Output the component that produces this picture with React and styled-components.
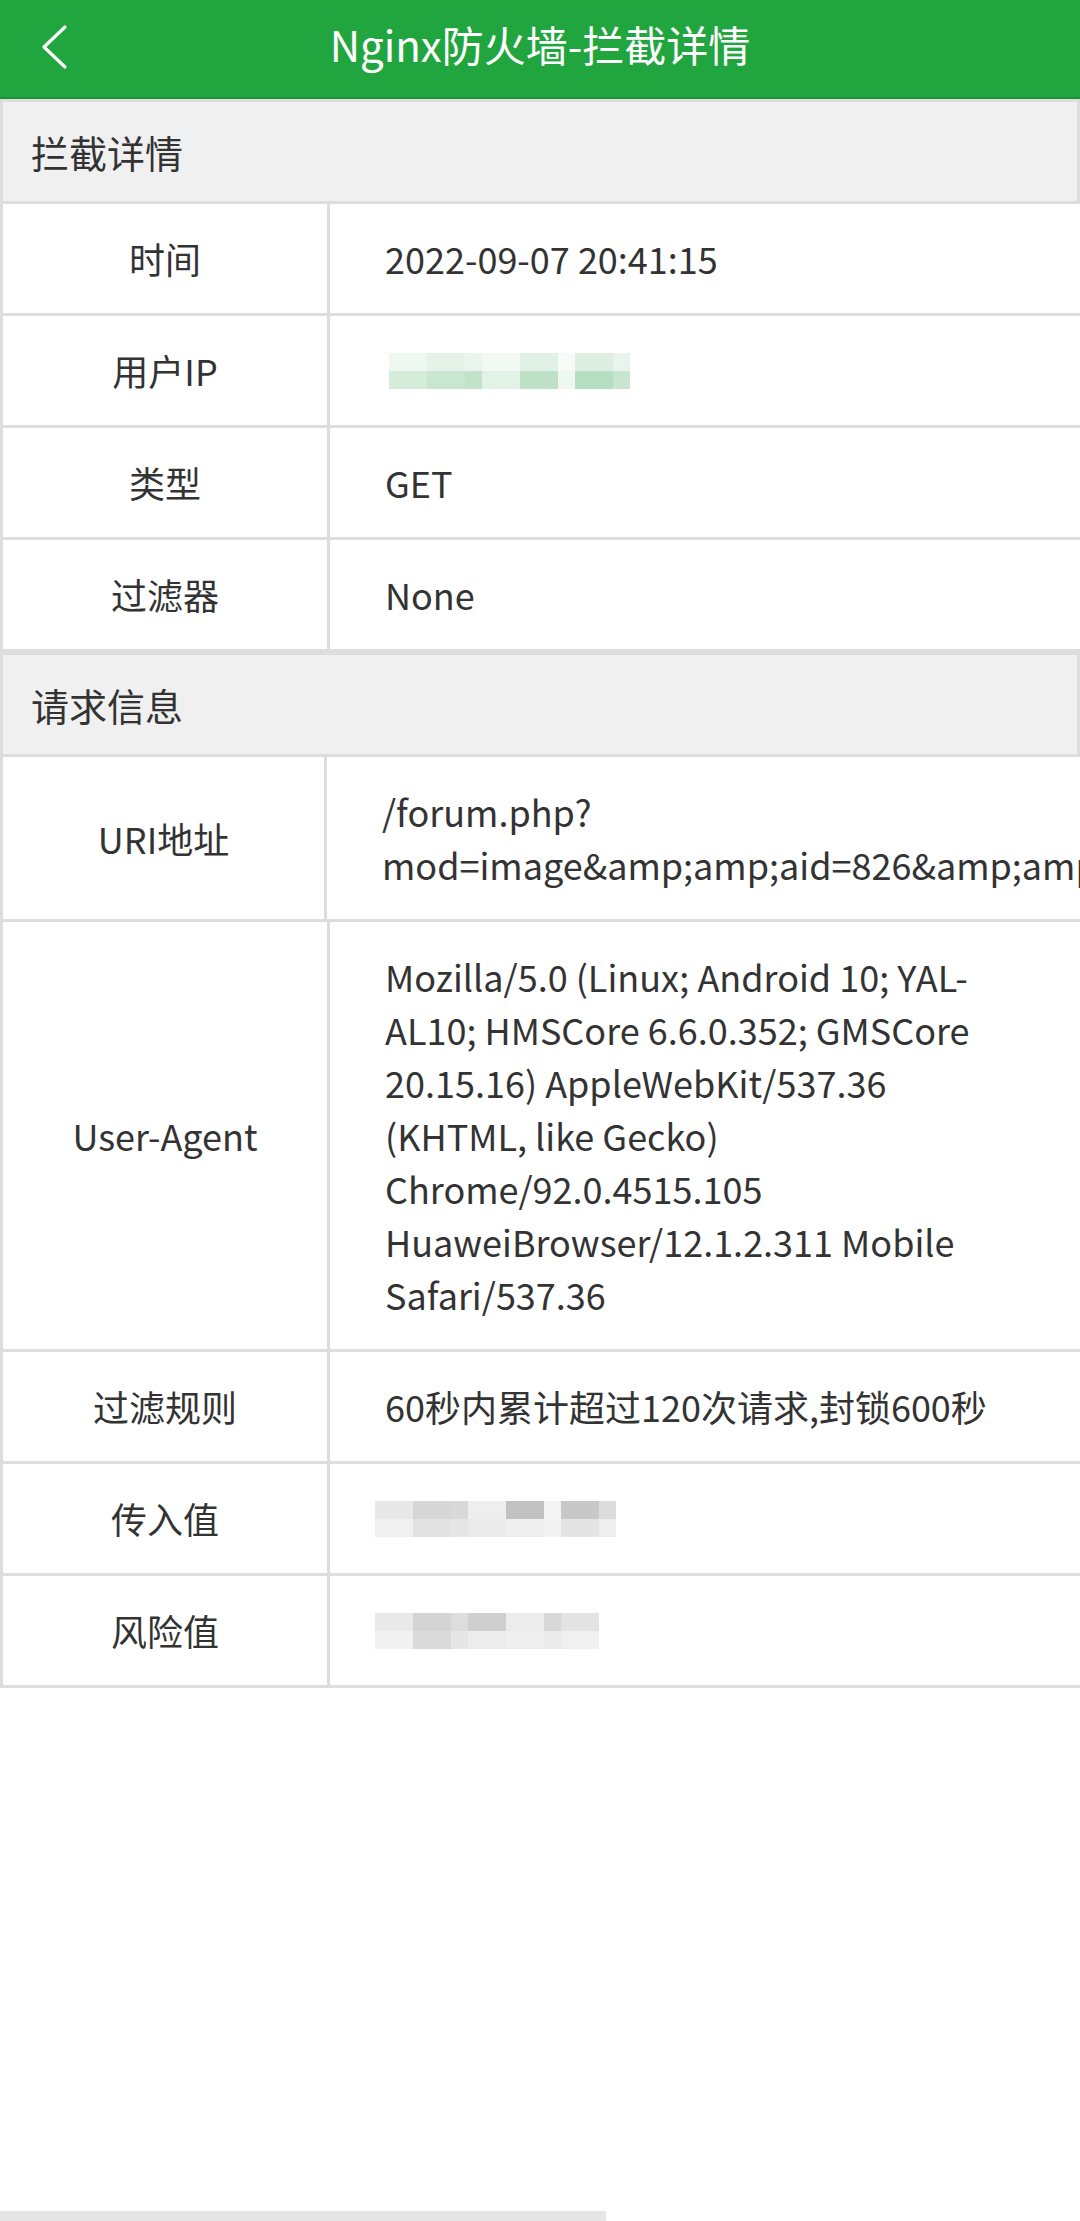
import React from 'react';
import styled, { createGlobalStyle } from 'styled-components';

const GlobalStyle = createGlobalStyle`
  html, body {
    margin: 0;
    padding: 0;
    background: #fff;
    overflow-x: hidden;
  }
  body {
    font-family: "Noto Sans CJK SC", "Noto Sans", sans-serif;
    color: #333;
  }
`

const Page = styled.div`
  width: 1080px;
  min-height: 2221px;
  overflow: hidden;
  background: #fff;
`

const Header = styled.div`
  position: relative;
  height: 99px;
  box-sizing: border-box;
  padding-bottom: 10px;
  background: #21a53e;
  border-bottom: 2px solid #1d9337;
  display: flex;
  align-items: center;
  justify-content: center;
`

const BackBtn = styled.div`
  position: absolute;
  left: 36px;
  top: 20px;
  width: 36px;
  height: 54px;
  display: flex;
  align-items: center;
  justify-content: center;
`

const Title = styled.h1`
  margin: 0;
  font-size: 42px;
  font-weight: 400;
  line-height: 56px;
  color: #fff;
`

const Section = styled.section`
  display: flex;
  flex-direction: column;
`

const SectionTitle = styled.div`
  background: #f0f0f0;
  border: 3px solid #dddddd;
  padding: 23px 28px;
  font-size: 38px;
  line-height: 53px;
  color: #333;
`

const Row = styled.div`
  display: grid;
  grid-template-columns: ${p => p.$labelWidth}px minmax(0, 1fr);
  border-left: 3px solid #dddddd;
  border-bottom: 3px solid #dddddd;
`

const Label = styled.div`
  border-right: 3px solid #dddddd;
  display: flex;
  align-items: center;
  justify-content: center;
  font-size: 36px;
  line-height: 53px;
  color: #333;
`

const Value = styled.div`
  padding: 28px 87px 28px 55px;
  font-size: 36px;
  line-height: 53px;
  color: #333;
  display: flex;
  align-items: center;
  min-height: 53px;
`

const ValueText = styled.div`
  white-space: ${p => (p.$nowrap ? 'nowrap' : 'normal')};
  word-break: normal;
`

const Mosaic = styled.div`
  display: flex;
  flex-direction: column;
  margin-left: ${p => p.$shift}px;
`

const MosaicRow = styled.div`
  display: flex;
`

const Tile = styled.span`
  display: block;
  width: ${p => p.$w}px;
  height: 18px;
  background: ${p => p.$c};
`

const ScrollThumb = styled.div`
  position: fixed;
  left: 0;
  bottom: 0;
  width: 606px;
  height: 10px;
  background: #e6e6e6;
`

const ipMosaic = [
  ['#eef7f0', '#e4f2e7', '#e9f5ec', '#f2f9f3', '#e2f1e5', '#f6fbf7', '#dcefe1', '#e9f5ec'],
  ['#d6ecdb', '#c9e6d0', '#c2e3ca', '#e3f2e6', '#bde0c6', '#eef7f0', '#b6dec1', '#c8e6cf'],
];
const inMosaic = [
  ['#e8e8e8', '#d6d6d6', '#d9d9d9', '#eeeeee', '#c2c2c2', '#f4f4f4', '#c8c8c8', '#dcdcdc'],
  ['#f0f0f0', '#e2e2e2', '#e6e6e6', '#eaeaea', '#efefef', '#f3f3f3', '#e4e4e4', '#eeeeee'],
];
const riskMosaic = [
  ['#e9e9e9', '#d4d4d4', '#dddddd', '#cfcfcf', '#ececec', '#d8d8d8', '#e3e3e3'],
  ['#f1f1f1', '#dadada', '#e6e6e6', '#ececec', '#efefef', '#eaeaea', '#f0f0f0'],
];
const tileWidths = [38, 38, 17, 38, 38, 17, 38, 17];

const Blur = ({ rows, shift }) => (
  <Mosaic $shift={shift}>
    {rows.map((r, i) => (
      <MosaicRow key={i}>
        {r.map((c, j) => (
          <Tile key={j} $c={c} $w={tileWidths[j]} />
        ))}
      </MosaicRow>
    ))}
  </Mosaic>
);

const ChevronLeft = () => (
  <svg width="30" height="46" viewBox="0 0 30 46" fill="none">
    <path d="M26 3 L5 23 L26 43" stroke="#fff" strokeWidth="3.2" strokeLinecap="round" strokeLinejoin="round" />
  </svg>
);

const ua =
  'Mozilla/5.0 (Linux; Android 10; YAL-AL10; HMSCore 6.6.0.352; GMSCore 20.15.16) AppleWebKit/537.36 (KHTML, like Gecko) Chrome/92.0.4515.105 HuaweiBrowser/12.1.2.311 Mobile Safari/537.36';

const uri = '/forum.php?mod=image&amp;amp;aid=826&amp;amp;size=300x300&amp;amp;key=';

const App = () => {
  return (
    <>
      <GlobalStyle />
      <Page>
        <Header>
          <BackBtn>
            <ChevronLeft />
          </BackBtn>
          <Title>Nginx防火墙-拦截详情</Title>
        </Header>

        <Section>
          <SectionTitle>拦截详情</SectionTitle>
          <Row $labelWidth={327}>
            <Label>时间</Label>
            <Value>2022-09-07 20:41:15</Value>
          </Row>
          <Row $labelWidth={327}>
            <Label>用户IP</Label>
            <Value>
              <Blur rows={ipMosaic} shift={4} />
            </Value>
          </Row>
          <Row $labelWidth={327}>
            <Label>类型</Label>
            <Value>GET</Value>
          </Row>
          <Row $labelWidth={327}>
            <Label>过滤器</Label>
            <Value>None</Value>
          </Row>
        </Section>

        <Section>
          <SectionTitle>请求信息</SectionTitle>
          <Row $labelWidth={324}>
            <Label>URI地址</Label>
            <Value>
              <ValueText>{uri}</ValueText>
            </Value>
          </Row>
          <Row $labelWidth={327}>
            <Label>User-Agent</Label>
            <Value>
              <ValueText>{ua}</ValueText>
            </Value>
          </Row>
          <Row $labelWidth={327}>
            <Label>过滤规则</Label>
            <Value>
              <ValueText $nowrap>60秒内累计超过120次请求,封锁600秒</ValueText>
            </Value>
          </Row>
          <Row $labelWidth={327}>
            <Label>传入值</Label>
            <Value>
              <Blur rows={inMosaic} shift={-10} />
            </Value>
          </Row>
          <Row $labelWidth={327}>
            <Label>风险值</Label>
            <Value>
              <Blur rows={riskMosaic} shift={-10} />
            </Value>
          </Row>
        </Section>
      </Page>
      <ScrollThumb />
    </>
  );
};

export default App;
